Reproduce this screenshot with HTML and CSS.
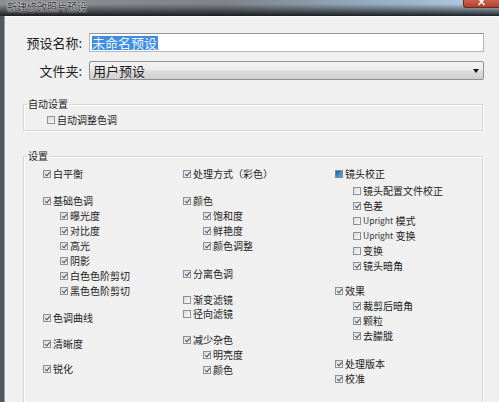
FILE: index.html
```html
<!DOCTYPE html>
<html lang="zh-CN">
<head>
<meta charset="utf-8">
<title>新建修改照片预设</title>
<link rel="stylesheet" href="styles.css">
</head>
<body>
<div class="window">
  <div class="titlebar">
    <span class="title">新建修改照片预设</span>
    <span class="close"><svg width="9" height="6" viewBox="0 0 9 6"><path d="M1.5 -1.5 L7.5 5 M7.5 -1.5 L1.5 5" stroke="#fff" stroke-width="1.6" fill="none"/></svg></span>
  </div>
  <div class="main">
    <div class="frame-left"></div>
    <div class="content">
      <div class="form">
        <label class="flabel">预设名称:</label>
        <div class="input"><span class="sel">未命名预设</span></div>
        <label class="flabel">文件夹:</label>
        <div class="select"><span class="sel-text">用户预设</span><span class="arrow"></span></div>
      </div>

      <fieldset class="group auto">
        <legend>自动设置</legend>
        <div class="auto-body">
          <div class="item"><span class="cb"></span>自动调整色调</div>
        </div>
      </fieldset>

      <fieldset class="group settings">
        <legend>设置</legend>
        <div class="cols">
          <div class="col c1">
            <div class="item"><span class="cb on"></span>白平衡</div>
            <div class="item mt12"><span class="cb on"></span>基础色调</div>
            <div class="item sub"><span class="cb on"></span>曝光度</div>
            <div class="item sub"><span class="cb on"></span>对比度</div>
            <div class="item sub"><span class="cb on"></span>高光</div>
            <div class="item sub"><span class="cb on"></span>阴影</div>
            <div class="item sub"><span class="cb on"></span>白色色阶剪切</div>
            <div class="item sub"><span class="cb on"></span>黑色色阶剪切</div>
            <div class="item mt12"><span class="cb on"></span>色调曲线</div>
            <div class="item mt11"><span class="cb on"></span>清晰度</div>
            <div class="item mt10"><span class="cb on"></span>锐化</div>
          </div>
          <div class="col c2">
            <div class="item"><span class="cb on"></span>处理方式（彩色）</div>
            <div class="item mt12"><span class="cb on"></span>颜色</div>
            <div class="item sub"><span class="cb on"></span>饱和度</div>
            <div class="item sub"><span class="cb on"></span>鲜艳度</div>
            <div class="item sub"><span class="cb on"></span>颜色调整</div>
            <div class="item mt13"><span class="cb on"></span>分离色调</div>
            <div class="item mt11"><span class="cb"></span>渐变滤镜</div>
            <div class="item tight"><span class="cb"></span>径向滤镜</div>
            <div class="item mt11"><span class="cb on"></span>减少杂色</div>
            <div class="item sub"><span class="cb on"></span>明亮度</div>
            <div class="item sub"><span class="cb on"></span>颜色</div>
          </div>
          <div class="col c3">
            <div class="item"><span class="cb mixed"></span>镜头校正</div>
            <div class="item sub mt2"><span class="cb"></span>镜头配置文件校正</div>
            <div class="item sub"><span class="cb on"></span>色差</div>
            <div class="item sub"><span class="cb"></span><span class="latin">Upright</span>&nbsp;模式</div>
            <div class="item sub"><span class="cb"></span><span class="latin">Upright</span>&nbsp;变换</div>
            <div class="item sub"><span class="cb"></span>变换</div>
            <div class="item sub"><span class="cb on"></span>镜头暗角</div>
            <div class="item mt10"><span class="cb on"></span>效果</div>
            <div class="item sub"><span class="cb on"></span>裁剪后暗角</div>
            <div class="item sub"><span class="cb on"></span>颗粒</div>
            <div class="item sub"><span class="cb on"></span>去朦胧</div>
            <div class="item mt13"><span class="cb on"></span>处理版本</div>
            <div class="item"><span class="cb on"></span>校准</div>
          </div>
        </div>
      </fieldset>
    </div>
  </div>
</div>
</body>
</html>
```

FILE: styles.css
```css
* { box-sizing: border-box; }

html, body {
  margin: 0;
  padding: 0;
}

body {
  width: 499px;
  height: 402px;
  overflow: hidden;
  background: #f0f0f0;
  font-family: "Noto Sans CJK SC", "Noto Sans", "Liberation Sans", sans-serif;
  color: #222;
}

.window {
  display: flex;
  flex-direction: column;
  height: 402px;
}

/* ---------- title bar ---------- */
.titlebar {
  height: 16px;
  flex: none;
  display: flex;
  align-items: flex-start;
  background:
    linear-gradient(to bottom, rgba(0,0,0,0) 25%, rgba(22,24,26,0.95) 100%),
    linear-gradient(to right, #8c9095 0%, #7d838a 45%, #9fb9cf 85%, #bcd3e6 100%);
}

.title {
  margin-left: 7px;
  margin-top: 1px;
  font-size: 10px;
  line-height: 11px;
  color: #2b2b2b;
  text-shadow: 0 0 2px #fff, 0 0 1px #fff;
}

.close {
  margin-left: auto;
  width: 36px;
  height: 8px;
  background: linear-gradient(to bottom, #c9624e, #b63f2a);
  border: 1px solid #6e2b20;
  border-top: none;
  border-right: none;
  border-bottom-left-radius: 3px;
  display: flex;
  justify-content: center;
  align-items: flex-start;
}

.close svg { display: block; }

/* ---------- body ---------- */
.main {
  flex: 1;
  display: flex;
  min-height: 0;
}

.frame-left {
  width: 5px;
  flex: none;
  background: #4f575f;
  border-right: 1px solid #9aa3ab;
}

.content {
  flex: 1;
  padding: 16px 15px 0 0;
  border-top: 1px solid #fbfbfb;
  background: #f0f0f0;
}

/* ---------- form ---------- */
.form {
  display: grid;
  grid-template-columns: 77px 1fr;
  column-gap: 7px;
  row-gap: 9px;
}

.flabel {
  font-size: 13px;
  line-height: 19px;
  text-align: right;
  color: #1e1e1e;
}

.input {
  height: 19px;
  background: #fff;
  border: 1px solid #b4b8bd;
  border-top-color: #8f959b;
  padding: 1px 2px;
  display: flex;
  align-items: center;
}

.sel {
  background: #3d8ee0;
  color: #eef5ff;
  font-size: 13px;
  line-height: 14px;
  padding: 0 1px 0 0;
}

.select {
  height: 19px;
  border: 1px solid #8e8f8f;
  border-radius: 2px;
  background: linear-gradient(to bottom, #f3f3f3 0%, #ebebeb 48%, #dddddd 52%, #cfcfcf 100%);
  display: flex;
  align-items: center;
  padding: 0 4px 0 3px;
}

.sel-text {
  font-size: 13px;
  line-height: 17px;
  color: #1e1e1e;
}

.arrow {
  margin-left: auto;
  width: 0;
  height: 0;
  border-left: 3px solid transparent;
  border-right: 3px solid transparent;
  border-top: 4px solid #111;
}

/* ---------- group boxes ---------- */
.group {
  margin: 0 1px 0 18px;
  border: 1px solid #d6d6d6;
  box-shadow: inset 1px 1px 0 #fff, 1px 1px 0 #fff;
  padding: 0;
  min-width: 0;
}

.group legend {
  font-size: 10px;
  line-height: 12px;
  padding: 0 1px;
  margin-left: 3px;
  color: #1e1e1e;
}

.auto {
  margin-top: 18px;
}

.auto-body {
  padding: 2px 0 3px 23px;
}

.settings {
  margin-top: 19px;
  height: 270px;
}

.cols {
  display: grid;
  grid-template-columns: 140px 152px 1fr;
  padding: 4px 0 0 19px;
}

.col {
  display: flex;
  flex-direction: column;
}

/* ---------- items ---------- */
.item {
  display: flex;
  align-items: center;
  height: 15px;
  font-size: 10px;
  line-height: 15px;
  white-space: nowrap;
  color: #222;
}

.latin {
  font-size: 8.5px;
  color: #333;
}

.c1 .sub { margin-left: 17px; }
.c2 .sub { margin-left: 20px; }
.c3 .sub { margin-left: 18px; }

.mt2  { margin-top: 2px; }
.mt10 { margin-top: 10px; }
.mt11 { margin-top: 11px; }
.mt12 { margin-top: 12px; }
.mt13 { margin-top: 13px; }
.tight { margin-top: -1px; }

.cb {
  position: relative;
  flex: none;
  width: 8px;
  height: 8px;
  margin-right: 2px;
  border: 1px solid #909090;
  background: linear-gradient(135deg, #d8d8d8, #fbfbfb);
}

.cb.on::after {
  content: "";
  position: absolute;
  left: 2px;
  top: 0;
  width: 2px;
  height: 4px;
  border: solid #41557f;
  border-width: 0 1.3px 1.3px 0;
  transform: rotate(38deg);
}

.cb.mixed {
  border-color: #7e8a96;
}

.cb.mixed::after {
  content: "";
  position: absolute;
  inset: 0;
  background: linear-gradient(135deg, #1d5b98, #6aaee0);
}
```
